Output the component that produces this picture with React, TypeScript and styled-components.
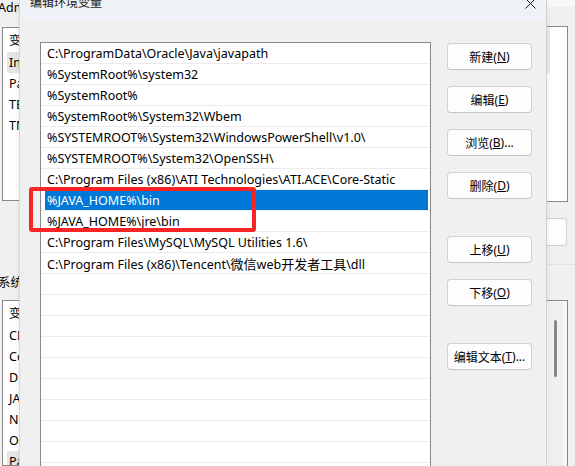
import React from "react";
import styled, { createGlobalStyle } from "styled-components";

const Global = createGlobalStyle`
  html, body {
    margin: 0;
    padding: 0;
    width: 575px;
    height: 466px;
    overflow: hidden;
    background: #f0f0f0;
  }
  body {
    font-family: "Noto Sans", "Noto Sans CJK SC", sans-serif;
    font-size: 12px;
    color: #000;
  }
  * { box-sizing: border-box; }
`;

const Stage = styled.div`
  position: relative;
  width: 575px;
  height: 466px;
  overflow: hidden;
  display: flex;
  background: #f0f0f0;
`;

/* ---------- window behind ---------- */
const BackStrip = styled.div<{ $w: number }>`
  width: ${(p) => p.$w}px;
  flex: none;
  display: flex;
  flex-direction: column;
  overflow: hidden;
`;

const BackLabel = styled.div<{ $mt: number }>`
  margin-top: ${(p) => p.$mt}px;
  margin-left: -2px;
  line-height: 16px;
  font-size: 12.5px;
  white-space: nowrap;
`;

const BackList = styled.div<{ $mt: number; $h?: number }>`
  margin-top: ${(p) => p.$mt}px;
  margin-left: 2px;
  width: 60px;
  height: ${(p) => (p.$h ? `${p.$h}px` : "auto")};
  flex: ${(p) => (p.$h ? "none" : "1")};
  background: #fff;
  border: 1px solid #8a8a8a;
  overflow: hidden;
`;

const BackHeader = styled.div`
  height: 24px;
  line-height: 25px;
  padding-left: 6px;
  font-size: 12.5px;
  white-space: nowrap;
`;

const BackRow = styled.div<{ $hl?: boolean }>`
  height: 21px;
  line-height: 22px;
  margin-left: 4px;
  padding-left: 2px;
  font-size: 12.5px;
  white-space: nowrap;
  background: ${(p) => (p.$hl ? "#e5e5e5" : "transparent")};
`;

const TopBand = styled.div`
  height: 7px;
  flex: none;
  background: #f8f8f8;
`;

const RightBox = styled.div<{ $mt: number; $h?: number; $bg: string }>`
  margin-top: ${(p) => p.$mt}px;
  width: 22px;
  height: ${(p) => (p.$h ? `${p.$h}px` : "auto")};
  flex: ${(p) => (p.$h ? "none" : "1")};
  background: ${(p) => p.$bg};
  border: 1px solid #8a8a8a;
  border-left: none;
  ${(p) => (p.$h ? "" : "border-bottom: none;")}
  display: flex;
  padding-top: 1px;
`;

const FaintBar = styled.div`
  width: 3px;
  height: 45px;
  margin-left: 1px;
  background: #ececec;
`;

const ScrollTrack = styled.div`
  width: 15px;
  margin-left: 2px;
  background: #f0f0f0;
  display: flex;
  justify-content: center;
  padding-top: 18px;
`;

const ScrollThumb = styled.div`
  width: 3px;
  height: 57px;
  border-radius: 2px;
  background: #878787;
`;

const RightButton = styled.div`
  margin-top: 16px;
  width: 21px;
  height: 28px;
  flex: none;
  background: #fdfdfd;
  border: 1px solid #d0d0d0;
  border-left: none;
  border-radius: 0 4px 4px 0;
`;

const RightRule = styled.div`
  margin-top: 18px;
  height: 1px;
  flex: none;
  background: #e2e2e2;
`;

/* ---------- dialog ---------- */
const Dialog = styled.div`
  width: 526px;
  flex: none;
  display: flex;
  flex-direction: column;
  background: #f0f0f0;
  box-shadow: -1px 0 0 #d8d8d8, 1px 0 0 #d0d0d0, 0 0 6px rgba(0, 0, 0, 0.12);
  z-index: 1;
`;

const TitleBar = styled.div`
  height: 20px;
  flex: none;
  display: flex;
  align-items: flex-start;
  padding: 0 10px;
  background: #eff2f7;
  overflow: hidden;
`;

const TitleText = styled.div`
  margin-top: -5px;
  line-height: 16px;
  font-size: 12px;
  color: #1a1a1a;
`;

const CloseIcon = styled.svg`
  margin-left: auto;
  margin-top: -2px;
  flex: none;
`;

const Body = styled.div`
  flex: 1;
  display: flex;
  align-items: flex-start;
  gap: 16px;
  padding: 22px 14px 0 20px;
`;

const PathList = styled.div`
  width: 391px;
  height: 440px;
  flex: none;
  background: #fff;
  border: 1px solid #8a8a8a;
  overflow: hidden;
`;

const PathRow = styled.div<{ $selected?: boolean }>`
  height: 21px;
  line-height: 22px;
  padding-left: 6px;
  font-size: 12.5px;
  border-bottom: 1px solid #ebebeb;
  white-space: nowrap;
  overflow: hidden;
  color: ${(p) => (p.$selected ? "#fff" : "#000")};
  background: ${(p) =>
    p.$selected
      ? "linear-gradient(to right, transparent 4px, #0078d7 4px, #0078d7 calc(100% - 2px), transparent calc(100% - 2px))"
      : "transparent"};
`;

const Cjk = styled.span`
  font-family: "Noto Sans CJK SC", sans-serif;
  font-size: 13px;
`;

const ButtonColumn = styled.div`
  width: 85px;
  flex: none;
  display: flex;
  flex-direction: column;
  margin-top: 1px;
`;

const DialogButton = styled.div<{ $mt: number }>`
  margin-top: ${(p) => p.$mt}px;
  height: 27px;
  display: flex;
  align-items: center;
  justify-content: center;
  background: #fdfdfd;
  border: 1px solid #d0d0d0;
  border-bottom-color: #c4c4c4;
  border-radius: 4px;
  font-size: 12px;
  white-space: nowrap;
`;

const Key = styled.span`
  text-decoration: underline;
  text-underline-offset: 1px;
`;

const Annotation = styled.div`
  position: absolute;
  left: 29px;
  top: 187px;
  width: 227px;
  height: 45px;
  border: 4px solid #f72525;
  border-radius: 3px;
  pointer-events: none;
  z-index: 2;
`;

const paths: React.ReactNode[] = [
  "C:\\ProgramData\\Oracle\\Java\\javapath",
  "%SystemRoot%\\system32",
  "%SystemRoot%",
  "%SystemRoot%\\System32\\Wbem",
  "%SYSTEMROOT%\\System32\\WindowsPowerShell\\v1.0\\",
  "%SYSTEMROOT%\\System32\\OpenSSH\\",
  "C:\\Program Files (x86)\\ATI Technologies\\ATI.ACE\\Core-Static",
  "%JAVA_HOME%\\bin",
  "%JAVA_HOME%\\jre\\bin",
  "C:\\Program Files\\MySQL\\MySQL Utilities 1.6\\",
  <>
    C:\Program Files (x86)\Tencent\<Cjk>微信</Cjk>web<Cjk>开发者工具</Cjk>\dll
  </>,
];

const buttons: { label: string; key: string; suffix?: string; mt: number }[] = [
  { label: "新建", key: "N", mt: 0 },
  { label: "编辑", key: "E", mt: 16 },
  { label: "浏览", key: "B", suffix: "...", mt: 16 },
  { label: "删除", key: "D", mt: 16 },
  { label: "上移", key: "U", mt: 37 },
  { label: "下移", key: "O", mt: 16 },
  { label: "编辑文本", key: "T", suffix: "...", mt: 37 },
];

export default function App() {
  const rows: React.ReactNode[] = [...paths, ...Array(10).fill("")];
  return (
    <>
      <Global />
      <Stage>
        <BackStrip $w={20}>
          <BackLabel $mt={0}>Administrator 的用户变量(U)</BackLabel>
          <BackList $mt={11} $h={174}>
            <BackHeader>变量</BackHeader>
            <BackRow $hl>IntelliJ IDEA</BackRow>
            <BackRow>Path</BackRow>
            <BackRow>TEMP</BackRow>
            <BackRow>TMP</BackRow>
          </BackList>
          <BackLabel $mt={74}>系统变量(S)</BackLabel>
          <BackList $mt={9}>
            <BackHeader>变量</BackHeader>
            <BackRow>CLASSPATH</BackRow>
            <BackRow>ComSpec</BackRow>
            <BackRow>DriverData</BackRow>
            <BackRow>JAVA_HOME</BackRow>
            <BackRow>NUMBER_OF_PROCESSORS</BackRow>
            <BackRow>OS</BackRow>
            <BackRow $hl>Path</BackRow>
          </BackList>
        </BackStrip>

        <Dialog>
          <TitleBar>
            <TitleText>编辑环境变量</TitleText>
            <CloseIcon width="11" height="11" viewBox="0 0 11 11">
              <path d="M0.5 0.5 L10.5 10.5 M10.5 0.5 L0.5 10.5" stroke="#1a1a1a" strokeWidth="1" fill="none" />
            </CloseIcon>
          </TitleBar>
          <Body>
            <PathList>
              {rows.map((r, i) => (
                <PathRow key={i} $selected={i === 7}>
                  {r}
                </PathRow>
              ))}
            </PathList>
            <ButtonColumn>
              {buttons.map((b) => (
                <DialogButton key={b.key} $mt={b.mt}>
                  {b.label}(<Key>{b.key}</Key>){b.suffix}
                </DialogButton>
              ))}
            </ButtonColumn>
          </Body>
        </Dialog>

        <BackStrip $w={29}>
          <TopBand />
          <RightBox $mt={19} $h={176} $bg="#fff">
            <FaintBar />
          </RightBox>
          <RightButton />
          <RightRule />
          <RightBox $mt={35} $bg="#f7f7f7">
            <ScrollTrack>
              <ScrollThumb />
            </ScrollTrack>
          </RightBox>
        </BackStrip>

        <Annotation />
      </Stage>
    </>
  );
}
